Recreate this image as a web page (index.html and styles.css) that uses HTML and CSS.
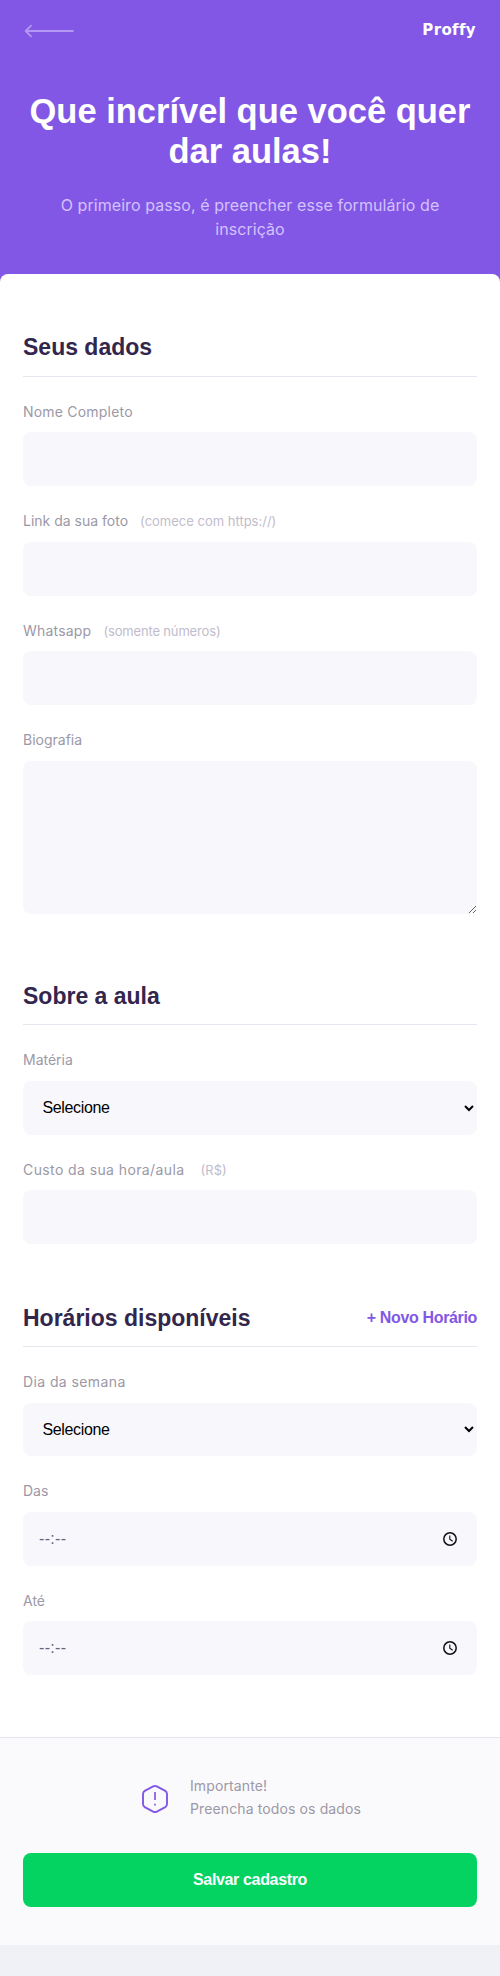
FILE: index.html
```html
<!DOCTYPE html>
<html lang="pt-BR">
<head>
<meta charset="utf-8">
<title>Proffy</title>
<link rel="stylesheet" href="styles.css">
</head>
<body>
<header class="page-header">
  <div class="top-bar">
    <svg class="back" width="50" height="14" viewBox="0 0 50 14" fill="none" stroke="#b497f2" stroke-width="1.8" stroke-linecap="round" stroke-linejoin="round"><path d="M49 7H2M7 1.700L1.700 7L7 12.300"/></svg>
    <span class="logo">Proffy</span>
  </div>
  <h1>Que incrível que você quer dar aulas!</h1>
  <p>O primeiro passo, é preencher esse formulário de inscrição</p>
</header>
<main class="card">
  <form>
    <fieldset class="first">
      <div class="legend"><h2>Seus dados</h2></div>
      <label class="tight t2">Nome Completo</label>
      <input class="control" type="text">
      <label><span>Link da sua foto</span><small>(comece com https://)</small></label>
      <input class="control" type="text">
      <label class="tight t2"><span>Whatsapp</span><small class="narrow">(somente números)</small></label>
      <input class="control" type="text">
      <label>Biografia</label>
      <textarea class="control bio"></textarea>
    </fieldset>
    <fieldset class="lesson">
      <div class="legend"><h2>Sobre a aula</h2></div>
      <label>Matéria</label>
      <select class="control"><option>Selecione</option></select>
      <label class="tight t4 cost"><span>Custo da sua hora/aula</span><small>(R$)</small></label>
      <input class="control" type="text">
    </fieldset>
    <fieldset class="schedule">
      <div class="legend"><h2>Horários disponíveis</h2><button type="button" class="add">+ Novo Horário</button></div>
      <label class="t4">Dia da semana</label>
      <select class="control short"><option>Selecione</option></select>
      <label>Das</label>
      <div class="control time"><span>--:--</span><svg width="16" height="16" viewBox="0 0 16 16" fill="none" stroke="#111"><circle cx="8" cy="8" r="6.200" stroke-width="1.500"/><path d="M7.800 4.500V8.300L10.700 10.300" stroke-width="1.100"/></svg></div>
      <label class="tight">Até</label>
      <div class="control time"><span>--:--</span><svg width="16" height="16" viewBox="0 0 16 16" fill="none" stroke="#111"><circle cx="8" cy="8" r="6.200" stroke-width="1.500"/><path d="M7.800 4.500V8.300L10.700 10.300" stroke-width="1.100"/></svg></div>
    </fieldset>
  </form>
  <footer>
    <div class="notice">
      <svg width="28" height="30" viewBox="0 0 28 30" fill="none" stroke="#8257e5" stroke-width="1.900" stroke-linecap="round" stroke-linejoin="round"><path d="M12.200 2.400Q14 1.500 15.800 2.400L24.300 6.900Q26 8 26 10V20Q26 22 24.300 23.100L15.800 27.600Q14 28.500 12.200 27.600L3.700 23.100Q2 22 2 20V10Q2 8 3.700 6.900Z"/><path d="M14 8.800V15.200M14 20.500V20.600" stroke-linecap="square" stroke-width="1.700"/></svg>
      <p>Importante!<br>Preencha todos os dados</p>
    </div>
    <button type="button" class="save">Salvar cadastro</button>
  </footer>
</main>
</body>
</html>
```
FILE: styles.css
```css
* { box-sizing: border-box; margin: 0; padding: 0; }
body { background: #f0f0f7; font-family: Inter, sans-serif; }
button { border: 0; background: none; font: bold 16px/34px "Liberation Sans", sans-serif; letter-spacing: -0.35px; }

.page-header { height: 294px; padding: 0 23px; background: #8257e5; text-align: center; }
.top-bar { display: flex; justify-content: space-between; padding: 18px 1px 0 1px; height: 91px; }
.back { margin-top: 6px; }
.logo { margin-top: 1px; color: #fff; font: bold 15px/22px "DejaVu Sans", sans-serif; letter-spacing: 0.35px; }
.page-header h1 { color: #fff; font: bold 34.5px/40px "Liberation Sans", sans-serif; }
.page-header p { width: 400px; margin: 22px auto 0; color: #d4c2ff; font-size: 16px; line-height: 24px; letter-spacing: 0.07px; }

.card { margin-top: -20px; padding-top: 56px; background: #fff; border-radius: 8px 8px 0 0; }
form { padding: 0 23px; }
fieldset { border: 0; }
.lesson { margin-top: 65px; }
.schedule { margin-top: 57px; }
.legend { display: flex; justify-content: space-between; align-items: center; padding-bottom: 11px; border-bottom: 1px solid #e6e6f0; }
.first .legend { padding-bottom: 12px; }
.legend h2 { color: #32264d; font: bold 23px/34px "Liberation Sans", sans-serif; }
.add { color: #8257e5; }

label { display: flex; align-items: baseline; gap: 12px; margin: 24px 0 10px; height: 22px; color: #9c98a6; font-size: 14px; line-height: 22px; }
.tight { margin-bottom: 9px; }
.t2 { letter-spacing: 0.2px; }
.t4 { letter-spacing: 0.4px; }
.cost { gap: 16px; }
label small { color: #c1bccc; font-size: 13px; line-height: 16px; letter-spacing: 0; }
label .narrow { letter-spacing: -0.16px; }

.control { display: block; width: 100%; height: 54px; padding: 0 16px; border: 0; border-radius: 8px; background: #f8f8fc; outline: 0; font: 16px "Liberation Sans", sans-serif; }
select.control { padding: 0 0 1px 15.5px; color: #000; letter-spacing: -0.35px; }
.bio { height: 153px; resize: vertical; }
select.short { height: 53px; }
.time { display: flex; align-items: center; justify-content: space-between; padding-right: 19px; color: #6a6180; letter-spacing: 0.3px; }

footer { margin-top: 62px; height: 208px; padding: 36px 23px 0; border-top: 1px solid #e6e6f0; background: #fafafc; }
.notice { display: flex; justify-content: center; align-items: center; gap: 21px; height: 46px; padding-left: 2px; }
.notice svg { margin-top: 3px; }
.notice p { color: #9c98a6; font-size: 14px; line-height: 23px; letter-spacing: 0.12px; }
.save { display: block; width: 100%; height: 54px; margin-top: 33px; border-radius: 8px; background: #04d361; color: #fff; }
```
